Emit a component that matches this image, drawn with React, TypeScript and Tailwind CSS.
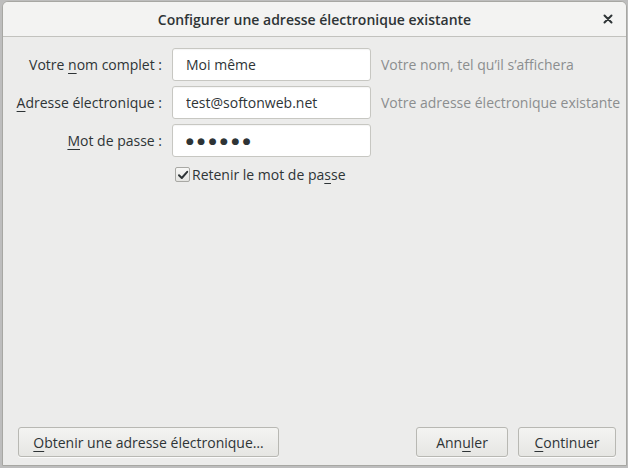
import { useState } from "react";

const font = { fontFamily: '"Open Sans", "Noto Sans", sans-serif' };

function U({ children }: { children: string }) {
  return <span className="underline underline-offset-[3px] decoration-1">{children}</span>;
}

function Row({ label, hint, children }: { label: React.ReactNode; hint?: string; children: React.ReactNode }) {
  return (
    <div className="flex items-center">
      <div className="w-[169px] pr-[10px] text-right text-[14px] text-[#2e3436] whitespace-nowrap">{label}</div>
      {children}
      {hint && <div className="ml-[10px] text-[14px] text-[#8b8e8f] whitespace-nowrap">{hint}</div>}
    </div>
  );
}

function Field({ value, password }: { value: string; password?: boolean }) {
  const [v, setV] = useState(value);
  return (
    <input
      type="text"
      value={v}
      onChange={(e) => setV(e.target.value)}
      className={`w-[199px] h-[33px] px-[13px] bg-white border border-[#c7c7c2] rounded-[3px] text-[#2e3436] outline-none shadow-[inset_0_1px_1px_rgba(0,0,0,0.04)] ${
        password ? "text-[9px] tracking-[3.5px]" : "text-[14px]"
      }`}
      style={{ fontFamily: password ? '"DejaVu Sans", sans-serif' : font.fontFamily }}
    />
  );
}

function Button({ children, className = "" }: { children: React.ReactNode; className?: string }) {
  return (
    <button
      className={`h-[30px] rounded-[3px] border border-[#b8b8b3] bg-gradient-to-b from-[#f4f4f2] to-[#e6e6e3] text-[14px] text-[#2e3436] shadow-[0_1px_0_rgba(255,255,255,0.8)] ${className}`}
      style={font}
    >
      {children}
    </button>
  );
}

export default function App() {
  const [remember, setRemember] = useState(true);

  return (
    <div className="w-[628px] h-[468px] bg-[#bdbdbd] pl-[2px] pt-[1px] pb-[2px] overflow-hidden" style={font}>
      <div className="w-[625px] h-[465px] flex flex-col bg-[#ececeb] border border-[#a7a7a3] rounded-t-[6px] overflow-hidden">
        {/* Title bar */}
        <div className="relative h-[35px] shrink-0 flex items-center justify-center bg-[#f3f3f2] border-b border-[#c2c2be]">
          <p className="font-semibold text-[14px] text-[#2e3436]">Configurer une adresse électronique existante</p>
          <button className="absolute right-[10px] top-[9px] w-[16px] h-[16px] flex items-center justify-center">
            <svg width="10" height="10" viewBox="0 0 10 10">
              <path d="M1.5 1.5 L8.5 8.5 M8.5 1.5 L1.5 8.5" stroke="#2e3436" strokeWidth="2" strokeLinecap="round" />
            </svg>
          </button>
        </div>

        {/* Form */}
        <div className="flex flex-col gap-[5px] pt-[11px]">
          <Row label={<>Votre <U>n</U>om complet :</>} hint="Votre nom, tel qu’il s’affichera">
            <Field value="Moi même" />
          </Row>
          <Row label={<><U>A</U>dresse électronique :</>} hint="Votre adresse électronique existante">
            <Field value="test@softonweb.net" />
          </Row>
          <Row label={<><U>M</U>ot de passe :</>}>
            <Field value="●●●●●●" password />
          </Row>
          <div className="flex items-center pl-[171px] pt-[2px]">
            <button
              onClick={() => setRemember(!remember)}
              className="w-[15px] h-[15px] ml-[1px] rounded-[2px] border border-[#a8a8a4] bg-gradient-to-b from-[#f7f7f6] to-[#e4e4e1] flex items-center justify-center"
            >
              {remember && (
                <svg width="12" height="12" viewBox="0 0 12 12">
                  <path d="M2 6.3 L4.8 9 L10.2 2.8" stroke="#2e3436" strokeWidth="2" fill="none" strokeLinecap="round" strokeLinejoin="round" />
                </svg>
              )}
            </button>
            <span className="ml-[2px] text-[14px] text-[#2e3436]">
              Retenir le mot de pa<U>s</U>se
            </span>
          </div>
        </div>

        {/* Footer */}
        <div className="mt-auto flex items-center pl-[15px] pr-[10px] pb-[8px]">
          <Button className="w-[261px]">
            <U>O</U>btenir une adresse électronique…
          </Button>
          <div className="ml-auto flex gap-[10px]">
            <Button className="w-[92px]">
              Ann<U>u</U>ler
            </Button>
            <Button className="w-[98px]">
              <U>C</U>ontinuer
            </Button>
          </div>
        </div>
      </div>
    </div>
  );
}
